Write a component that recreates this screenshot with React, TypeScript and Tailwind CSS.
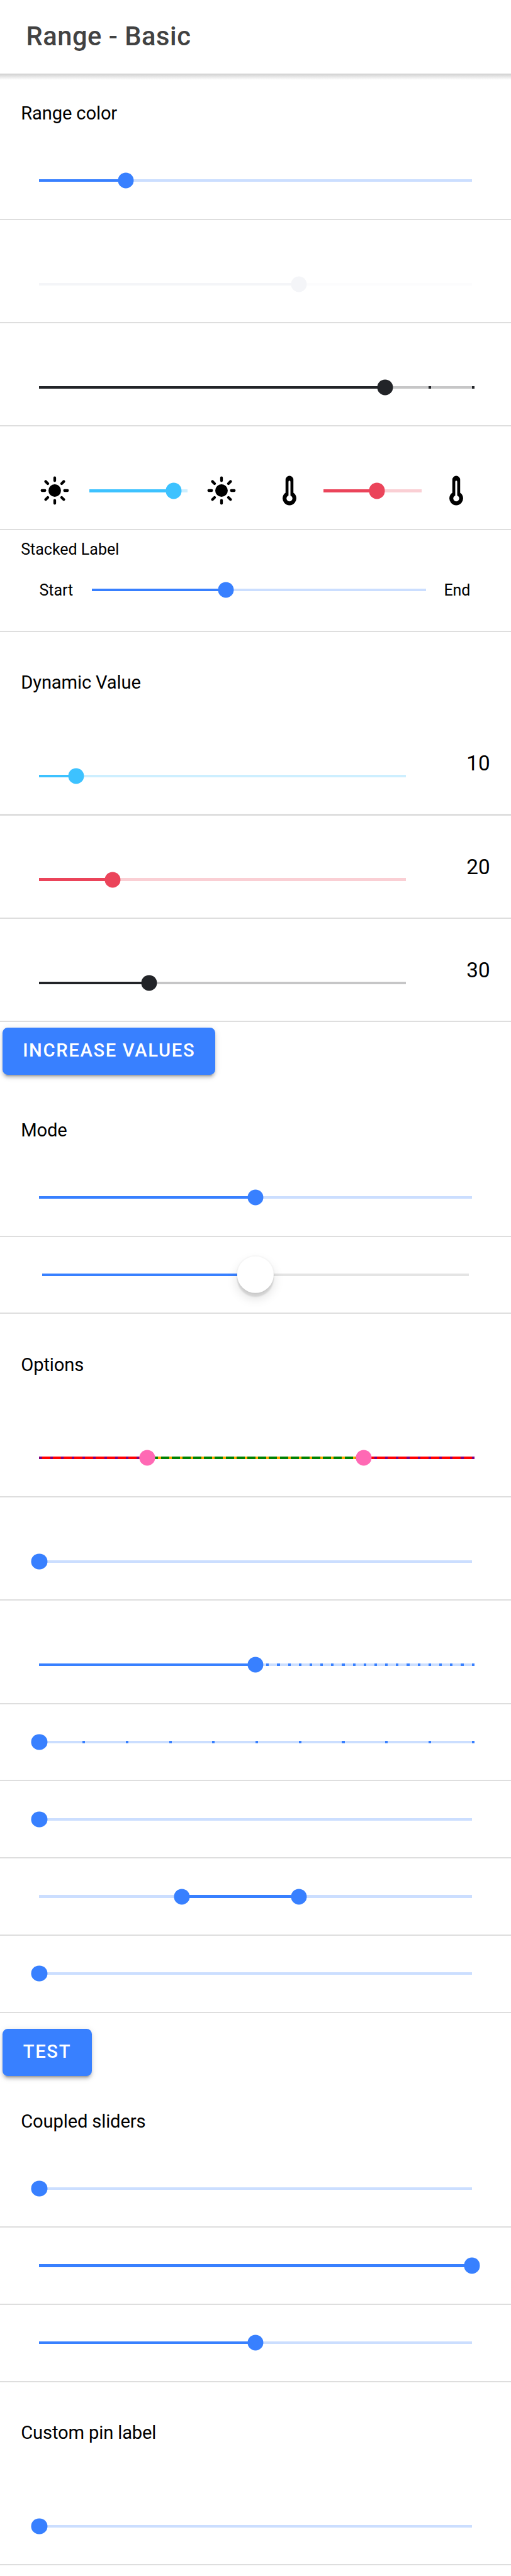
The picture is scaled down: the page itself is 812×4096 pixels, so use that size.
import type { ReactNode } from "react";

type Tone = "primary" | "light" | "dark" | "secondary" | "danger" | "rainbow";

const tones: Record<Tone, { solid: string; track: string; knob: string; tick: string; activeTick: string }> = {
  primary: { solid: "bg-[#3880ff]", track: "bg-[#3880ff]/26", knob: "bg-[#3880ff]", tick: "bg-[#3880ff]", activeTick: "bg-[#3880ff]" },
  light: { solid: "bg-[#f4f5f8]", track: "bg-[#f4f5f8]/26", knob: "bg-[#f4f5f8]", tick: "bg-[#f4f5f8]", activeTick: "bg-[#f4f5f8]" },
  dark: { solid: "bg-[#222428]", track: "bg-[#222428]/26", knob: "bg-[#222428]", tick: "bg-[#222428]", activeTick: "bg-[#222428]" },
  secondary: { solid: "bg-[#3dc2ff]", track: "bg-[#3dc2ff]/26", knob: "bg-[#3dc2ff]", tick: "bg-[#3dc2ff]", activeTick: "bg-[#3dc2ff]" },
  danger: { solid: "bg-[#eb445a]", track: "bg-[#eb445a]/26", knob: "bg-[#eb445a]", tick: "bg-[#eb445a]", activeTick: "bg-[#eb445a]" },
  rainbow: { solid: "bg-[#008000]", track: "bg-[#ff0000]", knob: "bg-[#ff69b4]", tick: "bg-[#800080]", activeTick: "bg-[#ffa500]" },
};

function SunIcon() {
  return (
    <svg viewBox="0 0 512 512" className="size-[49.97px] shrink-0">
      <circle cx="256" cy="256" r="102" fill="currentColor" />
      <path
        d="M256 48v48M256 416v48M48 256h48M416 256h48M109 109l34 34M369 369l34 34M403 109l-34 34M143 369l-34 34"
        stroke="currentColor"
        strokeWidth="44"
        strokeLinecap="round"
      />
    </svg>
  );
}

function ThermometerIcon() {
  return (
    <svg viewBox="0 0 512 512" className="size-[49.97px] shrink-0">
      <path
        fill="currentColor"
        fillRule="evenodd"
        d="M320 292V80a64 64 0 0 0-128 0v212a112 112 0 1 0 128 0zM272 338.7V112a16 16 0 0 0-32 0v226.7a48 48 0 1 0 32 0z"
      />
    </svg>
  );
}

interface RangeProps {
  value: number;
  lower?: number;
  tone?: Tone;
  step?: number;
}

function Range({ value, lower, tone = "primary", step }: RangeProps) {
  const t = tones[tone];
  const from = lower ?? 0;
  const ticks = step ? Array.from({ length: Math.round(100 / step) + 1 }, (_, i) => i * step) : [];
  const knobs = lower === undefined ? [value] : [lower, value];
  return (
    <div className={`relative h-[4.16px] flex-1 ${t.track}`}>
      {ticks.map((p) => (
        <div
          key={p}
          className={`absolute inset-y-0 w-[4.16px] ${p >= from && p <= value ? t.activeTick : t.tick} ${p >= from && p <= value ? "z-10" : ""}`}
          style={{ left: `${p}%` }}
        />
      ))}
      <div className={`absolute inset-y-0 ${t.solid}`} style={{ left: `${from}%`, right: `${100 - value}%` }} />
      {knobs.map((k) => (
        <div
          key={k}
          className={`absolute top-1/2 z-20 size-[25.1px] -translate-1/2 rounded-full ${t.knob}`}
          style={{ left: `${k}%` }}
        />
      ))}
    </div>
  );
}

function Item({ pin = false, children }: { pin?: boolean; children: ReactNode }) {
  return (
    <div className={pin ? "flex h-[164.42px] flex-col" : "flex h-[122.8px] flex-col"}>
      <div className={`flex flex-1 items-center px-[62.46px] ${pin ? "pt-[41.63px]" : ""}`}>{children}</div>
      <div className="h-[2.08px] bg-[#dedede]" />
    </div>
  );
}

function ValueItem({ value, tone }: { value: number; tone: Tone }) {
  return (
    <div className="flex h-[164.42px] flex-col">
      <div className="flex flex-1">
        <div className="flex w-[645.4px] items-center pl-[62.46px] pt-[41.63px]">
          <Range value={value} tone={tone} />
        </div>
        <div className="flex-1 pr-[33.3px] pt-[62px] text-right text-[33.3px] leading-[39px]">{value}</div>
      </div>
      <div className="h-[2.08px] bg-[#dedede]" />
    </div>
  );
}

function ListHeader({ children }: { children: ReactNode }) {
  return (
    <h2 className="flex h-[93.66px] items-center px-[33.3px] pt-[2px] text-[29.15px] tracking-[-0.005em]">{children}</h2>
  );
}

function List({ title, children }: { title: string; children: ReactNode }) {
  return (
    <section className="py-[16.65px]">
      <ListHeader>{title}</ListHeader>
      {children}
    </section>
  );
}

function Button({ width, children }: { width: string; children: ReactNode }) {
  return (
    <button
      className={`mx-[4.16px] my-[8.33px] block h-[74.93px] rounded-[8.33px] bg-[#3880ff] text-center text-[29.15px] font-medium tracking-[0.058em] whitespace-nowrap text-white uppercase shadow-[0_6.2px_2.1px_-4.2px_rgba(0,0,0,0.2),0_4.2px_4.2px_0_rgba(0,0,0,0.14),0_2.1px_10.4px_0_rgba(0,0,0,0.12)] ${width}`}
    >
      {children}
    </button>
  );
}

export default function App() {
  return (
    <div className="h-[4096px] w-[812px] overflow-hidden bg-white font-[Roboto,sans-serif] text-black">
      <header className="flex h-[116.55px] items-center px-[41.6px] text-[41.64px] font-medium tracking-[0.0125em] text-[#424242]">
        Range - Basic
      </header>
      <div className="-mb-[10.4px] h-[10.4px] bg-linear-to-b from-[#cfcfcf] to-white" />

      <List title="Range color">
        <Item>
          <Range value={20} />
        </Item>
        <Item pin>
          <Range value={60} tone="light" />
        </Item>
        <Item pin>
          <Range value={80} tone="dark" step={10} />
        </Item>
        <Item pin>
          <div className="flex flex-1 justify-between">
            <div className="flex w-[314.4px] items-center gap-[29.15px]">
              <SunIcon />
              <Range value={86.3} tone="secondary" />
              <SunIcon />
            </div>
            <div className="flex w-[314.4px] items-center gap-[29.15px]">
              <ThermometerIcon />
              <Range value={54.1} tone="danger" />
              <ThermometerIcon />
            </div>
          </div>
        </Item>
        <div className="flex h-[162.34px] flex-col">
          <div className="px-[33.3px] pt-[16px] text-[24.98px] leading-[30px]">Stacked Label</div>
          <div className="flex h-[98px] items-center px-[62.46px] text-[24.98px]">
            <span className="w-[83.9px] pt-px">Start</span>
            <Range value={40} />
            <span className="w-[72.6px] pt-px pl-[28.6px] tracking-[-0.005em]">End</span>
          </div>
          <div className="mt-auto h-[2.08px] bg-[#dedede]" />
        </div>
      </List>

      <section className="pt-[16.65px]">
        <ListHeader>Dynamic Value</ListHeader>
        <ValueItem value={10} tone="secondary" />
        <ValueItem value={20} tone="danger" />
        <ValueItem value={30} tone="dark" />
        <div className="pb-[16.65px]">
          <div className="flow-root">
            <Button width="w-[338.2px]">Increase Values</Button>
          </div>
        </div>
      </section>

      <List title="Mode">
        <Item>
          <Range value={50} />
        </Item>
        <Item>
          <div className="relative mx-[4.16px] flex h-[4.16px] flex-1 bg-[#e4e4e4]">
            <div className="w-1/2 bg-[#3880ff]" />
            <div className="absolute top-1/2 left-1/2 size-[58.3px] -translate-1/2 rounded-full bg-white shadow-[0_6.2px_2.1px_rgba(0,0,0,0.1),0_8.3px_16.7px_rgba(0,0,0,0.13),0_0_0_2.1px_rgba(0,0,0,0.02)]" />
          </div>
        </Item>
      </List>

      <List title="Options">
        <Item pin>
          <Range lower={25} value={75} tone="rainbow" step={2.5} />
        </Item>
        <Item pin>
          <Range value={0} />
        </Item>
        <Item pin>
          <Range value={50} step={2.5} />
        </Item>
        <Item>
          <Range value={0} step={10} />
        </Item>
        <Item>
          <Range value={0} />
        </Item>
        <Item>
          <Range lower={33} value={60} />
        </Item>
        <Item>
          <Range value={0} />
        </Item>
      </List>

      <div className="flow-root">
        <Button width="w-[141.6px]">Test</Button>
      </div>

      <List title="Coupled sliders">
        <Item>
          <Range value={0} />
        </Item>
        <Item>
          <Range value={100} />
        </Item>
        <Item>
          <Range value={50} />
        </Item>
      </List>

      <List title="Custom pin label">
        <Item pin>
          <Range value={0} />
        </Item>
      </List>
    </div>
  );
}
